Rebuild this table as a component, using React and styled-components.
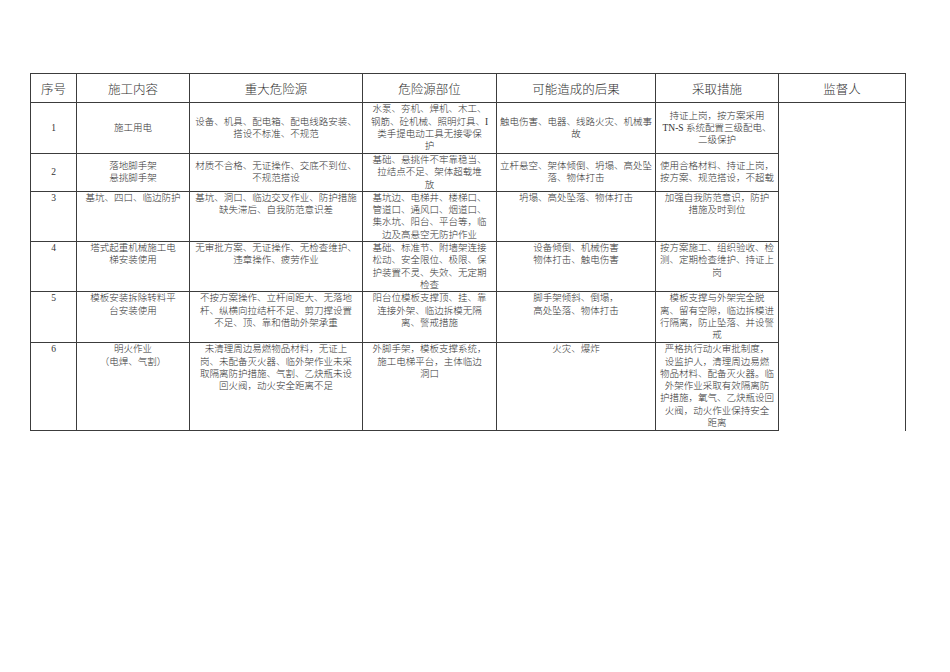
import React from 'react'
import styled, { createGlobalStyle } from 'styled-components'

const GlobalStyle = createGlobalStyle`
  html, body {
    margin: 0;
    padding: 0;
    background: #ffffff;
  }
  body {
    font-family: "Liberation Serif", "Noto Sans CJK SC", serif;
    color: #222;
  }
`

const Page = styled.div`
  width: 950px;
  height: 672px;
  padding: 73px 0 0 30px;
  box-sizing: border-box;
`

const Table = styled.table`
  width: 876px;
  table-layout: fixed;
  border-collapse: collapse;
`

const HeadCell = styled.th`
  height: 28px;
  padding: 0;
  border: 1px solid #3c3c3c;
  font-weight: 300;
  font-size: 12.5px;
  text-align: center;
  vertical-align: middle;
  color: #333;
`

const Cell = styled.td`
  padding: 0 2px;
  border: 1px solid #3c3c3c;
  border-bottom: ${(p) => (p.$open ? 'none' : '1px solid #3c3c3c')};
  font-size: 9.5px;
  font-weight: 300;
  line-height: 12.3px;
  text-align: center;
  vertical-align: ${(p) => (p.$middle ? 'middle' : 'top')};
  color: #333;
  white-space: nowrap;
  overflow: hidden;
`

const Line = styled.div`
  display: block;
`

const Row = styled.tr`
  height: ${(p) => p.$h}px;
`

const widths = [46, 113, 173, 134, 159, 123, 127]
const headers = ['序号', '施工内容', '重大危险源', '危险源部位', '可能造成的后果', '采取措施', '监督人']

const rows = [
  {
    h: 51,
    middle: true,
    cells: [
      ['1'],
      ['施工用电'],
      ['设备、机具、配电箱、配电线路安装、', '搭设不标准、不规范'],
      ['水泵、夯机、焊机、木工、', '钢筋、砼机械、照明灯具、I', '类手提电动工具无接零保', '护'],
      ['触电伤害、电器、线路火灾、机械事', '故'],
      ['持证上岗，按方案采用', 'TN-S 系统配置三级配电、', '二级保护'],
    ],
  },
  {
    h: 37,
    middle: true,
    cells: [
      ['2'],
      ['落地脚手架', '悬挑脚手架'],
      ['材质不合格、无证操作、交底不到位、', '不规范搭设'],
      ['基础、悬挑件不牢靠稳当、', '拉结点不足、架体超载堆', '放'],
      ['立杆悬空、架体倾倒、坍塌、高处坠', '落、物体打击'],
      ['使用合格材料、持证上岗，', '按方案、规范搭设，不超载'],
    ],
  },
  {
    h: 50,
    cells: [
      ['3'],
      ['基坑、四口、临边防护'],
      ['基坑、洞口、临边交叉作业、防护措施', '缺失滞后、自我防范意识差'],
      ['基坑边、电梯井、楼梯口、', '管道口、通风口、烟道口、', '集水坑、阳台、平台等，临', '边及高悬空无防护作业'],
      ['坍塌、高处坠落、物体打击'],
      ['加强自我防范意识，防护', '措施及时到位'],
    ],
  },
  {
    h: 50,
    cells: [
      ['4'],
      ['塔式起重机械施工电', '梯安装使用'],
      ['无审批方案、无证操作、无检查维护、', '违章操作、疲劳作业'],
      ['基础、标准节、附墙架连接', '松动、安全限位、极限、保', '护装置不灵、失效、无定期', '检查'],
      ['设备倾倒、机械伤害', '物体打击、触电伤害'],
      ['按方案施工、组织验收、检', '测、定期检查维护、持证上', '岗'],
    ],
  },
  {
    h: 51,
    cells: [
      ['5'],
      ['模板安装拆除转料平', '台安装使用'],
      ['不按方案操作、立杆间距大、无落地', '杆、纵横向拉结杆不足、剪刀撑设置', '不足、顶、靠和借助外架承重'],
      ['阳台位模板支撑顶、挂、靠', '连接外架、临边拆模无隔', '离、警戒措施'],
      ['脚手架倾斜、倒塌，', '高处坠落、物体打击'],
      ['模板支撑与外架完全脱', '离、留有空隙，临边拆模进', '行隔离，防止坠落、并设警', '戒'],
    ],
  },
  {
    h: 88,
    cells: [
      ['6'],
      ['明火作业', '（电焊、气割）'],
      ['未清理周边易燃物品材料，无证上', '岗、未配备灭火器、临外架作业未采', '取隔离防护措施、气割、乙炔瓶未设', '回火阀，动火安全距离不足'],
      ['外脚手架，模板支撑系统，', '施工电梯平台，主体临边', '洞口'],
      ['火灾、爆炸'],
      ['严格执行动火审批制度，', '设监护人，清理周边易燃', '物品材料、配备灭火器。临', '外架作业采取有效隔离防', '护措施，氧气、乙炔瓶设回', '火阀，动火作业保持安全', '距离'],
    ],
  },
]

export default function App() {
  return (
    <>
      <GlobalStyle />
      <Page>
        <Table>
          <colgroup>
            {widths.map((w, i) => (
              <col key={i} style={{ width: w }} />
            ))}
          </colgroup>
          <thead>
            <tr>
              {headers.map((h) => (
                <HeadCell key={h}>{h}</HeadCell>
              ))}
            </tr>
          </thead>
          <tbody>
            {rows.map((row, ri) => (
              <Row key={ri} $h={row.h}>
                {row.cells.map((lines, ci) => (
                  <Cell key={ci} $middle={row.middle}>
                    {lines.map((l, li) => (
                      <Line key={li}>{l}</Line>
                    ))}
                  </Cell>
                ))}
                {ri === 0 && <Cell rowSpan={rows.length} $open />}
              </Row>
            ))}
          </tbody>
        </Table>
      </Page>
    </>
  )
}
